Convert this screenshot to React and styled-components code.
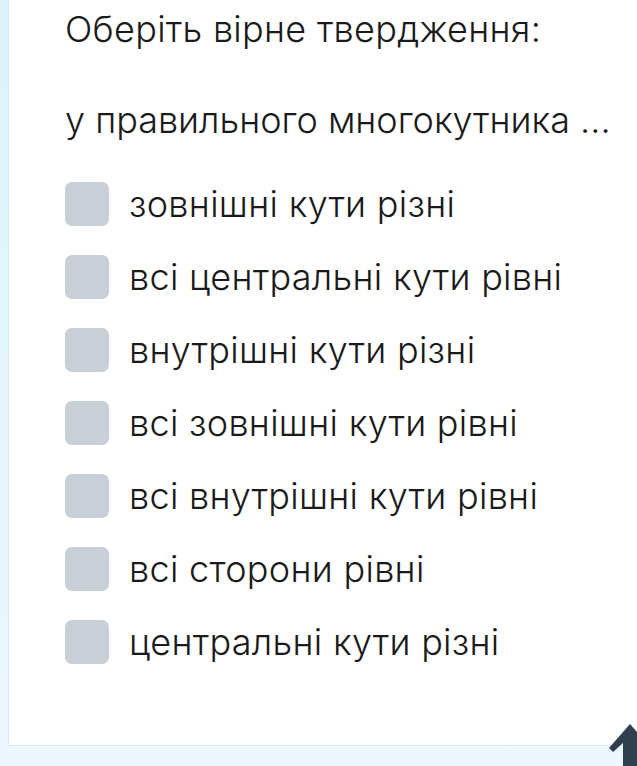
import styled, { createGlobalStyle } from "styled-components";

const GlobalStyle = createGlobalStyle`
  html, body {
    margin: 0;
    padding: 0;
    background: #e6f5fb;
    overflow: hidden;
  }
  * {
    box-sizing: border-box;
  }
`;

const Page = styled.div`
  width: 637px;
  height: 766px;
  position: relative;
  overflow: hidden;
  background: linear-gradient(180deg, #def2fa 0%, #ecf8fd 100%);
`;

const Card = styled.div`
  margin-left: 8px;
  width: 660px;
  height: 746px;
  background: #fff;
  border-left: 1px solid #d3ecf5;
  border-bottom: 1px solid #d3ecf5;
  padding: 7px 0 0 56px;
  font-family: Inter, "DejaVu Sans", sans-serif;
  color: #1a1a1a;
  letter-spacing: 0.3px;
`;

const Title = styled.div`
  font-size: 36px;
  line-height: 44px;
  font-weight: 300;
  white-space: nowrap;
  margin-top: ${(p) => p.$gap || 0}px;
  letter-spacing: ${(p) => (p.$tight ? 0 : 0.3)}px;
`;

const Options = styled.div`
  display: flex;
  flex-direction: column;
  gap: 29px;
  margin-top: 40px;
`;

const Option = styled.label`
  display: flex;
  align-items: center;
  gap: 20px;
  height: 44px;
  font-size: 36px;
  font-weight: 300;
  white-space: nowrap;
  cursor: pointer;
`;

const Box = styled.span`
  width: 44px;
  height: 44px;
  border-radius: 7px;
  background: #c9cfd7;
  flex-shrink: 0;
`;

const UpButton = styled.svg`
  position: fixed;
  left: 600px;
  top: 722px;
`;

const options = [
  "зовнішні кути різні",
  "всі центральні кути рівні",
  "внутрішні кути різні",
  "всі зовнішні кути рівні",
  "всі внутрішні кути рівні",
  "всі сторони рівні",
  "центральні кути різні",
];

export default function App() {
  return (
    <Page>
      <GlobalStyle />
      <Card>
        <Title>Оберіть вірне твердження:</Title>
        <Title $gap={47} $tight>
          у правильного многокутника ...
        </Title>
        <Options>
          {options.map((text) => (
            <Option key={text}>
              <Box />
              {text}
            </Option>
          ))}
        </Options>
      </Card>
      <UpButton width="60" height="44" viewBox="0 0 60 44">
        <polygon
          fill="#2f3f4d"
          points="30,2 51,26 47,30 37,21 37,44 23,44 23,21 13,30 9,26"
        />
      </UpButton>
    </Page>
  );
}
